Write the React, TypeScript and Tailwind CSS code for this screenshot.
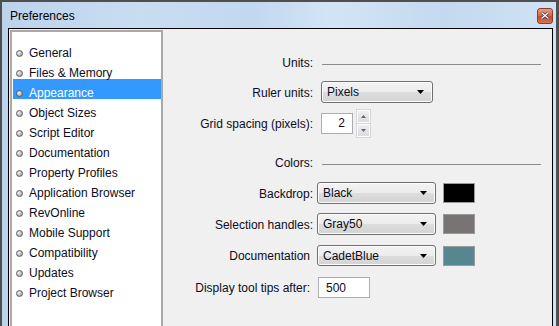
import React from 'react'

const sections = [
  'General',
  'Files & Memory',
  'Appearance',
  'Object Sizes',
  'Script Editor',
  'Documentation',
  'Property Profiles',
  'Application Browser',
  'RevOnline',
  'Mobile Support',
  'Compatibility',
  'Updates',
  'Project Browser',
]

function Bullet() {
  return (
    <span className="w-[7px] h-[7px] rounded-full border border-[#5e5e5e] bg-[radial-gradient(circle_at_35%_35%,#f4f4f4,#b8b8b8_60%,#8a8a8a)] shrink-0" />
  )
}

function Combo({ value, w }: { value: string; w: string }) {
  return (
    <div className={`${w} h-full rounded-[3px] border border-[#707070] bg-[linear-gradient(#f3f3f3,#ececec_50%,#dddddd_51%,#d3d3d3)] shadow-[inset_0_0_0_1px_#fcfcfc] flex items-center pl-[5px] pr-[8px]`}>
      <span className="flex-1 leading-none">{value}</span>
      <svg width="7" height="4" viewBox="0 0 7 4"><path d="M0 0h7L3.5 4z" fill="#000" /></svg>
    </div>
  )
}

function Swatch({ color }: { color: string }) {
  return <div className={`ml-[7px] w-[32px] h-[20px] border border-[#9a9a9a] ${color}`} />
}

function SpinBtn({ up }: { up?: boolean }) {
  return (
    <div className="w-[13px] h-[13px] border border-[#fdfdfd] bg-[linear-gradient(#eeeeee,#dcdcdc)] shadow-[0_0_0_1px_#d8d8d8] flex items-center justify-center">
      <svg width="5" height="3" viewBox="0 0 5 3">
        <path d={up ? 'M0 3h5L2.5 0z' : 'M0 0h5L2.5 3z'} fill="#56698f" />
      </svg>
    </div>
  )
}

function Heading({ text }: { text: string }) {
  return (
    <div className="flex items-center h-[16px]">
      <div className="w-[150px] text-right">{text}</div>
      <div className="ml-[9px] w-[219px] h-px bg-[#8c8c8c] mt-[2px]" />
    </div>
  )
}

export default function App() {
  return (
    <div className="w-[559px] h-[326px] overflow-hidden bg-[#4f4f4f] pt-[2px] pl-[2px] pr-[3px] flex font-['Liberation_Sans',Arial,sans-serif] text-[12px] text-[#0c0c22]">
      <div className="flex-1 flex flex-col bg-[linear-gradient(90deg,#bcd3ec,#c9ddf1_25%,#c2d8ef_45%,#d3e4f5_60%,#c4d9ef_80%,#d0e2f4)]">
        {/* title bar */}
        <div className="h-[26px] flex items-center pl-[8px] pr-[3px] shrink-0">
          <span className="flex-1 text-black pt-[1px]">Preferences</span>
          <div className="w-[16px] h-[16px] mt-[1px] rounded-[3px] border border-[#8a3b2c] bg-[linear-gradient(#e89a84,#d66a4d_45%,#c8462a_55%,#d8735a)] flex items-center justify-center">
            <svg width="8" height="7" viewBox="0 0 8 7">
              <path d="M1 1l6 5M7 1L1 6" stroke="#3b2a2a" strokeWidth="2.6" strokeLinecap="square" />
              <path d="M1 1l6 5M7 1L1 6" stroke="#fff" strokeWidth="1.4" strokeLinecap="square" />
            </svg>
          </div>
        </div>

        <div className="flex-1 flex pl-[6px] pr-[3px]">
          <div className="flex-1 border border-black bg-[#f0f0f0] flex pl-[1px] pt-[1px]">
            {/* section list */}
            <div className="w-[153px] border-2 border-[#a9a9a9] bg-white pt-[7px] h-[320px]">
              {sections.map((s) => (
                <div
                  key={s}
                  className={`h-[20px] ml-[1px] pl-[3px] flex items-center gap-[6px] ${
                    s === 'Appearance' ? 'bg-[#3399ff] text-white' : ''
                  }`}
                >
                  <span className="mt-[8px] flex"><Bullet /></span>
                  <span className="pt-[8px]">{s}</span>
                </div>
              ))}
            </div>

            {/* settings */}
            <div className="flex-1 flex flex-col pt-[25px]">
              <Heading text="Units:" />
              <div className="flex items-center h-[22px] mt-[10px]">
                <div className="w-[150px] text-right pt-[1px]">Ruler units:</div>
                <div className="ml-[8px] h-full flex">
                  <Combo value="Pixels" w="w-[112px]" />
                </div>
              </div>
              <div className="flex items-center h-[28px] mt-[6px]">
                <div className="w-[150px] text-right pt-[1px]">Grid spacing (pixels):</div>
                <div className="ml-[8px] w-[32px] h-[21px] bg-white border border-[#abadb3] flex items-center justify-end pr-[7px]">2</div>
                <div className="ml-[4px] flex flex-col gap-[1px]">
                  <SpinBtn up />
                  <SpinBtn />
                </div>
              </div>

              <div className="mt-[18px]">
                <Heading text="Colors:" />
              </div>
              <div className="flex items-center h-[22px] mt-[11px]">
                <div className="w-[150px] text-right pt-[1px]">Backdrop:</div>
                <div className="ml-[4px] h-full flex">
                  <Combo value="Black" w="w-[119px]" />
                </div>
                <Swatch color="bg-black" />
              </div>
              <div className="flex items-center h-[22px] mt-[9px]">
                <div className="w-[150px] text-right pt-[1px]">Selection handles:</div>
                <div className="ml-[4px] h-full flex">
                  <Combo value="Gray50" w="w-[119px]" />
                </div>
                <Swatch color="bg-[#787473]" />
              </div>
              <div className="flex items-center h-[21px] mt-[10px]">
                <div className="w-[150px] text-right pr-[3px] pt-[1px]">Documentation</div>
                <div className="ml-[4px] h-full flex">
                  <Combo value="CadetBlue" w="w-[119px]" />
                </div>
                <Swatch color="bg-[#568790]" />
              </div>
              <div className="flex items-center h-[21px] mt-[11px]">
                <div className="w-[150px] text-right pr-[3px]">Display tool tips after:</div>
                <div className="ml-[5px] w-[52px] h-full bg-white border border-[#abadb3] flex items-center pl-[7px]">500</div>
              </div>
            </div>
          </div>
        </div>
      </div>
    </div>
  )
}
